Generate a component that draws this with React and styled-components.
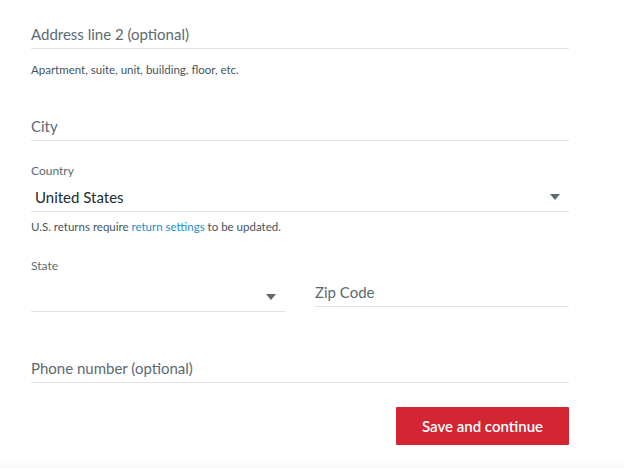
import React from "react"
import styled, { createGlobalStyle } from "styled-components"

const GlobalStyle = createGlobalStyle`
  html, body {
    margin: 0;
    padding: 0;
    background: #ffffff;
  }
  body {
    font-family: Lato, "Open Sans", "Liberation Sans", sans-serif;
    -webkit-font-smoothing: antialiased;
  }
`

const Page = styled.div`
  width: 624px;
  height: 468px;
  display: flex;
  flex-direction: column;
  overflow: hidden;
`

const Form = styled.div`
  width: 538px;
  padding: 20px 0 0 31px;
  display: flex;
  flex-direction: column;
  flex: 1;
`

const TextField = styled.div`
  height: 28px;
  display: flex;
  align-items: center;
  border-bottom: 1px solid #e1e4e6;
  font-size: 15px;
  color: #5a6a72;
  margin-top: ${p => p.$top || 0}px;
`

const Label = styled.div`
  font-size: 12px;
  line-height: 16px;
  color: #5a6a72;
  margin-top: ${p => p.$top || 0}px;
`

const Helper = styled.div`
  font-size: 11.5px;
  line-height: 16px;
  color: #44545c;
  margin-top: ${p => p.$top || 0}px;
`

const Link = styled.span`
  color: #1a8fc9;
`

const Select = styled.div`
  height: 28px;
  display: flex;
  align-items: center;
  justify-content: space-between;
  border-bottom: 1px solid #e1e4e6;
  padding: 0 9px 0 4px;
  font-size: 15px;
  color: #222a2e;
  margin-top: ${p => p.$top || 0}px;
`

const Caret = styled.span`
  width: 0;
  height: 0;
  border-left: 5px solid transparent;
  border-right: 5px solid transparent;
  border-top: 6px solid #5a6a72;
`

const Row = styled.div`
  display: grid;
  grid-template-columns: 254px 254px;
  column-gap: 30px;
  margin-top: 23px;
`

const Column = styled.div`
  display: flex;
  flex-direction: column;
  padding-top: ${p => p.$top || 0}px;
`

const Actions = styled.div`
  display: flex;
  justify-content: flex-end;
  margin-top: 24px;
`

const Button = styled.button`
  width: 173px;
  height: 38px;
  border: none;
  border-radius: 1px;
  background: #d42532;
  color: #ffffff;
  font-family: inherit;
  font-size: 15px;
  font-weight: 600;
  cursor: pointer;
`

const Footer = styled.div`
  height: 8px;
  background: linear-gradient(#ffffff, #f8f8f8);
`

export default function App() {
  return (
    <Page>
      <GlobalStyle />
      <Form>
        <TextField>Address line 2 (optional)</TextField>
        <Helper $top={13}>Apartment, suite, unit, building, floor, etc.</Helper>
        <TextField $top={34}>City</TextField>
        <Label $top={22}>Country</Label>
        <Select $top={4}>
          United States
          <Caret />
        </Select>
        <Helper $top={7}>
          U.S. returns require <Link>return settings</Link> to be updated.
        </Helper>
        <Row>
          <Column>
            <Label>State</Label>
            <Select $top={9}>
              <span />
              <Caret />
            </Select>
          </Column>
          <Column $top={20}>
            <TextField>Zip Code</TextField>
          </Column>
        </Row>
        <TextField $top={42}>Phone number (optional)</TextField>
        <Actions>
          <Button>Save and continue</Button>
        </Actions>
      </Form>
      <Footer />
    </Page>
  )
}
